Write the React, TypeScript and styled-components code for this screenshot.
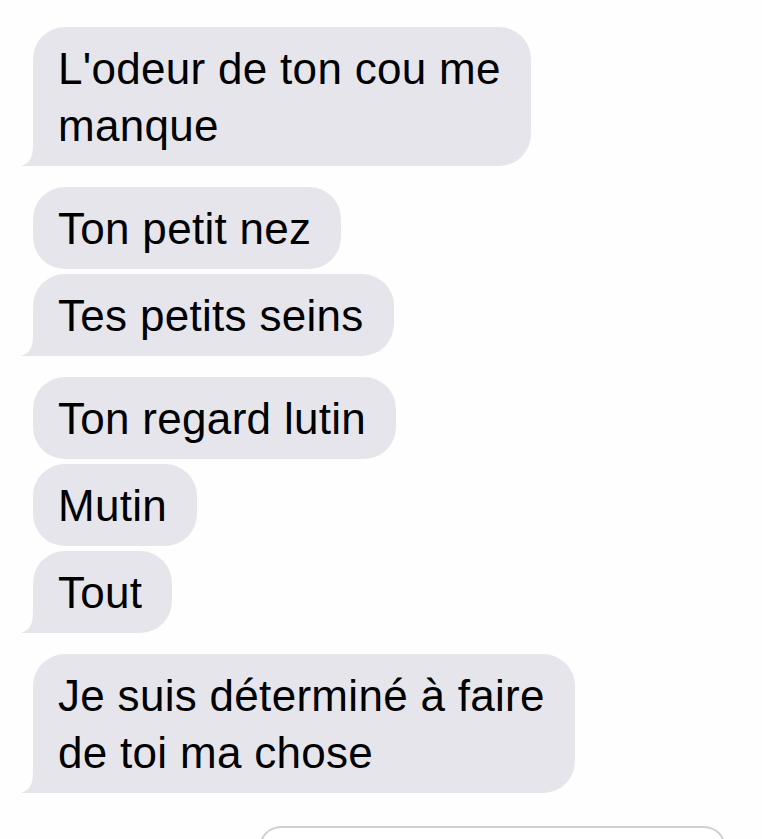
import React from "react";
import styled, { createGlobalStyle } from "styled-components";

const BUBBLE_GREY = "#e6e5eb";

const GlobalStyle = createGlobalStyle`
  html, body {
    margin: 0;
    padding: 0;
    background: #fefefe;
    overflow: hidden;
  }
  body {
    font-family: "Liberation Sans", Arial, Helvetica, sans-serif;
    -webkit-font-smoothing: antialiased;
  }
`;

const Thread = styled.main`
  display: flex;
  flex-direction: column;
  align-items: flex-start;
  padding: 27px 0 0 33px;
  height: 839px;
  box-sizing: border-box;
`;

const Group = styled.div`
  display: flex;
  flex-direction: column;
  align-items: flex-start;
  gap: 5px;
  margin-bottom: 21px;
`;

const Bubble = styled.div<{ $tail?: boolean }>`
  position: relative;
  width: fit-content;
  box-sizing: border-box;
  padding: 12.5px 30px 12.5px 25px;
  background: ${BUBBLE_GREY};
  color: #000;
  font-size: 44px;
  line-height: 57px;
  letter-spacing: 0.3px;
  white-space: nowrap;
  border-radius: 32px;
  ${p => p.$tail && "border-bottom-left-radius: 20px;"}
`;

const Tail = styled.svg`
  position: absolute;
  left: -12px;
  bottom: 0;
  width: 40px;
  height: 28px;
`;

const Composer = styled.div`
  display: flex;
  align-items: flex-start;
  margin-top: 12px;
  padding-left: 226px;
  width: 100%;
  box-sizing: border-box;
`;

const InputField = styled.div`
  width: 463px;
  height: 40px;
  border: 2px solid #cfcfd3;
  border-bottom: none;
  border-radius: 22px 22px 0 0;
  background: #fff;
`;

const groups: string[][][] = [
  [["L'odeur de ton cou me", "manque"]],
  [["Ton petit nez"], ["Tes petits seins"]],
  [["Ton regard lutin"], ["Mutin"], ["Tout"]],
  [["Je suis déterminé à faire", "de toi ma chose"]],
];

function Message({ lines, tail }: { lines: string[]; tail: boolean }) {
  return (
    <Bubble $tail={tail}>
      {tail && (
        <Tail viewBox="0 0 40 28" aria-hidden>
          <path
            d="M0 27.5 C7 26.5 12 21 12 8 L12 0 L40 0 L40 28 L6 28 C3 28 1 28 0 27.5 Z"
            fill={BUBBLE_GREY}
          />
        </Tail>
      )}
      {lines.map((l, i) => (
        <React.Fragment key={i}>
          {i > 0 && <br />}
          {l}
        </React.Fragment>
      ))}
    </Bubble>
  );
}

export default function App() {
  return (
    <>
      <GlobalStyle />
      <Thread>
        {groups.map((g, gi) => (
          <Group key={gi}>
            {g.map((lines, mi) => (
              <Message key={mi} lines={lines} tail={mi === g.length - 1} />
            ))}
          </Group>
        ))}
        <Composer>
          <InputField />
        </Composer>
      </Thread>
    </>
  );
}
